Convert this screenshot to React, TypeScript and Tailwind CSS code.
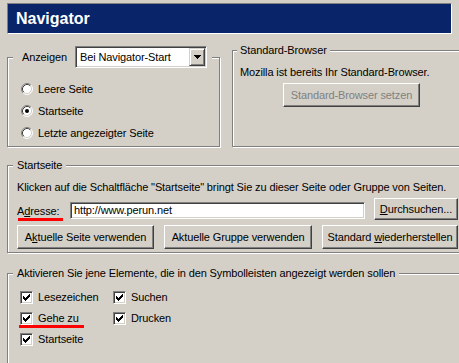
import type { ReactNode } from "react";

const raised =
  "border border-t-white border-l-white border-r-[#404040] border-b-[#404040] shadow-[inset_-1px_-1px_0_#808080]";
const sunken =
  "border border-t-[#808080] border-l-[#808080] border-r-white border-b-white shadow-[inset_1px_1px_0_#404040,inset_-1px_-1px_0_#d4d0c8]";
const etched = "border border-[#808080] shadow-[inset_1px_1px_0_#fff,1px_1px_0_#fff]";

function Radio({ checked }: { checked?: boolean }) {
  return (
    <svg width="12" height="12" viewBox="0 0 12 12" className="shrink-0">
      <circle cx="6" cy="6" r="5" fill="#fff" />
      <path d="M2.11 9.89A5.5 5.5 0 0 1 9.89 2.11" fill="none" stroke="#808080" />
      <path d="M9.89 2.11A5.5 5.5 0 0 1 2.11 9.89" fill="none" stroke="#fff" />
      <path d="M2.82 9.18A4.5 4.5 0 0 1 9.18 2.82" fill="none" stroke="#404040" />
      <path d="M9.18 2.82A4.5 4.5 0 0 1 2.82 9.18" fill="none" stroke="#d4d0c8" />
      {checked && <circle cx="6" cy="6" r="2" fill="#000" />}
    </svg>
  );
}

function Checkbox() {
  return (
    <span className={`flex h-[13px] w-[13px] shrink-0 items-center justify-center bg-white ${sunken}`}>
      <svg width="7" height="7" viewBox="0 0 7 7" shapeRendering="crispEdges">
        <path
          d="M6 0h1v1H6zM5 1h2v1H5zM0 2h1v1H0zM4 2h3v1H4zM0 3h2v1H0zM3 3h3v1H3zM0 4h5v1H0zM1 5h3v1H1zM2 6h1v1H2z"
          fill="#000"
        />
      </svg>
    </span>
  );
}

function Button({ children, className = "", disabled }: { children: ReactNode; className?: string; disabled?: boolean }) {
  return (
    <div
      className={`flex items-center justify-center bg-[#d4d0c8] ${raised} ${
        disabled ? "text-[#808080]" : ""
      } ${className}`}
    >
      {children}
    </div>
  );
}

function GroupBox({
  legend,
  legendClass,
  className,
  children,
}: {
  legend: ReactNode;
  legendClass: string;
  className: string;
  children: ReactNode;
}) {
  return (
    <div className={`relative shrink-0 ${etched} ${className}`}>
      <div className={`absolute bg-[#d4d0c8] ${legendClass}`}>{legend}</div>
      {children}
    </div>
  );
}

export default function App() {
  return (
    <div className="h-[363px] w-[459px] overflow-hidden bg-[#d4d0c8] pl-[7px] pt-[3px] font-['Liberation_Sans',Arial,sans-serif] text-[11px] leading-[13px] tracking-[-0.12px] text-black">
      {/* Titel */}
      <div className="flex h-[31px] w-[445px] border border-t-[#808080] border-l-[#808080] border-r-white border-b-white">
        <div className="flex flex-1 items-center bg-[#0a246a] pl-[8px] text-[16px] font-bold tracking-normal text-white">
          Navigator
        </div>
      </div>

      <div className="mt-[16px] flex items-start">
        <GroupBox
          className="mt-[7px] h-[90px] w-[213px] pl-[13px] pt-[20px]"
          legendClass="left-[5px] -top-[12px] flex items-center pl-[9px] pr-[5px]"
          legend={
            <>
              <span className="w-[53px]">Anzeigen</span>
              <div className={`flex h-[22px] w-[132px] items-center justify-between bg-white p-[1px] ${sunken}`}>
                <span className="pl-[3px]">Bei Navigator-Start</span>
                <div
                  className="flex h-[18px] w-[16px] items-center justify-center border border-t-[#d4d0c8] border-l-[#d4d0c8] border-r-[#404040] border-b-[#404040] bg-[#d4d0c8] shadow-[inset_1px_1px_0_#fff,inset_-1px_-1px_0_#808080]"
                >
                  <svg width="7" height="4" viewBox="0 0 7 4" shapeRendering="crispEdges">
                    <path d="M0 0h7v1H0zM1 1h5v1H1zM2 2h3v1H2zM3 3h1v1H3z" fill="#000" />
                  </svg>
                </div>
              </div>
            </>
          }
        >
          {[
            ["Leere Seite", false],
            ["Startseite", true],
            ["Letzte angezeigter Seite", false],
          ].map(([label, checked]) => (
            <div key={label as string} className="flex h-[22px] items-center gap-[5px]">
              <Radio checked={checked as boolean} />
              <span>{label}</span>
            </div>
          ))}
        </GroupBox>

        <GroupBox
          className="ml-[12px] h-[97px] w-[232px] pl-[7px] pt-[15px]"
          legendClass="left-[4px] -top-[7px] px-[3px]"
          legend="Standard-Browser"
        >
          <div>Mozilla ist bereits Ihr Standard-Browser.</div>
          <Button disabled className="ml-[43px] mt-[4px] h-[24px] w-[137px]">
            Standard-Browser setzen
          </Button>
        </GroupBox>
      </div>

      <GroupBox
        className="mt-[18px] h-[88px] w-[460px] pl-[9px] pt-[15px]"
        legendClass="left-[5px] -top-[7px] px-[4px]"
        legend="Startseite"
      >
        <div>Klicken auf die Schaltfläche "Startseite" bringt Sie zu dieser Seite oder Gruppe von Seiten.</div>
        <div className="mt-[4px] flex h-[22px] items-start">
          <span className="relative mt-[7px] w-[53px]">
            A<span className="underline">d</span>resse:
            <span className="absolute left-[1px] top-[13px] h-[3px] w-[45px] bg-[#ff0000]" />
          </span>
          <div className={`mt-[4px] h-[17px] w-[295px] bg-white pl-[3px] pt-[1px] ${sunken}`}>http://www.perun.net</div>
          <Button className="ml-[9px] h-[22px] w-[84px]">
            <span>
              <span className="underline">D</span>urchsuchen...
            </span>
          </Button>
        </div>
        <div className="mt-[5px] flex gap-[10px]">
          <Button className="h-[24px] w-[137px]">
            <span>
              A<span className="underline">k</span>tuelle Seite verwenden
            </span>
          </Button>
          <Button className="h-[24px] w-[148px]">Aktuelle Gruppe verwenden</Button>
          <Button className="h-[24px] w-[136px]">
            <span>
              Standard <span className="underline">w</span>iederherstellen
            </span>
          </Button>
        </div>
      </GroupBox>

      <GroupBox
        className="mt-[20px] h-[100px] w-[460px] pl-[12px] pt-[13px]"
        legendClass="left-[5px] -top-[7px] px-[4px]"
        legend="Aktivieren Sie jene Elemente, die in den Symbolleisten angezeigt werden sollen"
      >
        <div className="grid grid-cols-[93px_auto]">
          {["Lesezeichen", "Suchen", "Gehe zu", "Drucken", "Startseite"].map((label) => (
            <div key={label} className="relative flex h-[21px] items-center gap-[5px]">
              <Checkbox />
              <span>{label}</span>
              {label === "Gehe zu" && (
                <span className="absolute -left-[1px] top-[17px] h-[3px] w-[65px] bg-[#ff0000]" />
              )}
            </div>
          ))}
        </div>
      </GroupBox>
    </div>
  );
}
